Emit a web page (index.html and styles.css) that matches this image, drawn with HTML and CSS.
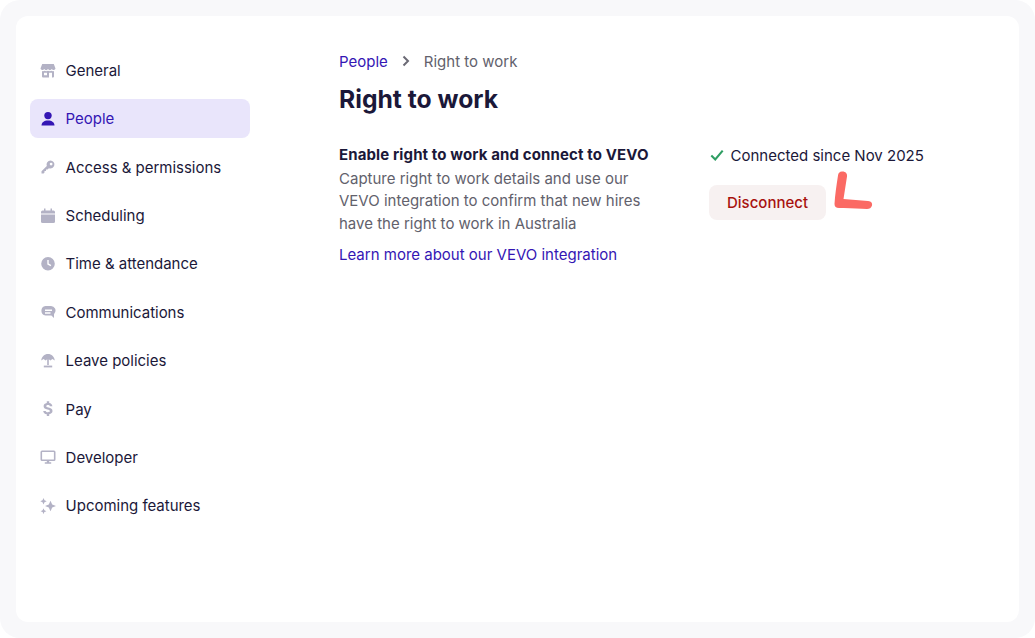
FILE: index.html
```html
<!DOCTYPE html>
<html lang="en">
<head>
<meta charset="utf-8">
<title>Right to work</title>
<link rel="stylesheet" href="styles.css">
</head>
<body>
<div class="frame">
  <div class="card">
    <nav class="nav">
      <a class="nav-item"><svg class="icon" viewBox="0 0 16 16"><path d="M2.200 1h11.600L15.500 5.500a2 2 0 0 1-3.700.6 2.200 2.200 0 0 1-3.800 0 2.200 2.200 0 0 1-3.800 0A2 2 0 0 1 .5 5.500z"/><path fill-rule="evenodd" d="M2 8c1 .3 1.900.2 2.600-.3 1 .6 2.100.6 3.400 0 1.200.6 2.400.6 3.400 0 .7.500 1.600.6 2.600.3v5.500a1 1 0 0 1-1 1H3a1 1 0 0 1-1-1zM4 9.800v2.400h3V9.800zm5 0v4.700h3V9.800z"/></svg><span>General</span></a>
      <a class="nav-item active"><svg class="icon" viewBox="0 0 16 16"><circle cx="8" cy="4.600" r="3.700"/><path d="M1.500 14.500c0-3 2.500-5 6.500-5s6.500 2 6.500 5z"/></svg><span>People</span></a>
      <a class="nav-item"><svg class="icon" viewBox="0 0 16 16"><path fill-rule="evenodd" d="M10.500 1.500a4 4 0 1 1-1.600 7.700L7.500 10.600H6v1.500H4.500v1.400l-.9.900H1.500v-2.200l5.300-5.300a4 4 0 0 1 3.700-5.400zm.6 2.200a1.400 1.400 0 1 0 0 2.800 1.400 1.400 0 0 0 0-2.800z"/></svg><span>Access &amp; permissions</span></a>
      <a class="nav-item"><svg class="icon" viewBox="0 0 16 16"><path d="M4 .5h1.500v2h5v-2H12v2h1.500A1.500 1.500 0 0 1 15 4v1.500H1V4a1.500 1.500 0 0 1 1.500-1.500H4z"/><path d="M1 6.500h14v7a1.500 1.500 0 0 1-1.500 1.500h-11A1.500 1.500 0 0 1 1 13.500z"/></svg><span>Scheduling</span></a>
      <a class="nav-item"><svg class="icon" viewBox="0 0 16 16"><path fill-rule="evenodd" d="M8 1a6.800 6.800 0 1 1 0 13.600A6.800 6.800 0 0 1 8 1zM7.300 4v4.400l3.300 1.900.7-1.200-2.600-1.500V4z"/></svg><span>Time &amp; attendance</span></a>
      <a class="nav-item"><svg class="icon" viewBox="0 0 16 16"><path fill-rule="evenodd" d="M5.500 2h5.500a4.500 4.500 0 0 1 3.500 7.300c-.3.500-.5.900-.5 1.300V14l-2.600-2.500H5.500a4.800 4.800 0 0 1 0-9.500zM5 5.500v1.500h7V5.500zm0 2.800v1.400h5.500V8.300z"/></svg><span>Communications</span></a>
      <a class="nav-item"><svg class="icon" viewBox="0 0 16 16"><path d="M8 1c3.600 0 6.200 2.500 6.800 6.500l-2.400-1.500-2 1.600-1.600-1.400v5.700H7.200V6.200L5.600 7.600l-2-1.600-2.400 1.500C1.800 3.500 4.400 1 8 1z"/><path d="M3.800 12.600h8.400v1.800H3.800z"/></svg><span>Leave policies</span></a>
      <a class="nav-item"><svg class="icon" viewBox="0 0 16 16"><path d="M6.800.2h2.400v1.900c1.800.3 3 1.400 3.200 3.200H9.900c-.2-.8-.8-1.200-1.900-1.200-1 0-1.700.4-1.700 1.100 0 .7.600 1 2.200 1.400 2.400.6 4 1.300 4 3.400 0 1.700-1.200 2.900-3.300 3.200v1.900H6.800v-1.900c-2.100-.3-3.400-1.500-3.600-3.300h2.500c.2.900.9 1.300 2.200 1.300 1.200 0 1.900-.4 1.900-1.200 0-.8-.7-1.100-2.400-1.500-2.200-.5-3.800-1.300-3.800-3.200 0-1.700 1.200-2.900 3.200-3.200z"/></svg><span>Pay</span></a>
      <a class="nav-item"><svg class="icon" viewBox="0 0 16 16"><path fill-rule="evenodd" d="M2 1.500h12A1.500 1.500 0 0 1 15.500 3v7.500A1.500 1.500 0 0 1 14 12H9.200v1.200h2v1.500H4.800v-1.500h2V12H2A1.500 1.500 0 0 1 .5 10.500V3A1.500 1.500 0 0 1 2 1.500zm.1 1.600V10.400h11.800V3.100z"/></svg><span>Developer</span></a>
      <a class="nav-item"><svg class="icon" viewBox="0 0 16 16"><path d="M10.500 2.800l1.700 3.600 3.800 1.600-3.800 1.600-1.700 3.600-1.700-3.600L5 8l3.800-1.600z"/><path d="M3.500 0l1 2.300 2.200 1-2.200 1-1 2.300-1-2.300-2.200-1 2.200-1z"/><path d="M3.500 10.300l.9 2 2 .9-2 .9-.9 2-.9-2-2-.9 2-.9z"/></svg><span>Upcoming features</span></a>
    </nav>
    <main class="main">
      <div class="crumbs">
        <a class="crumb-link">People</a>
        <svg class="chev" viewBox="0 0 10 12"><path d="M2.500 1.500 7 6l-4.500 4.500"/></svg>
        <span class="crumb-current">Right to work</span>
      </div>
      <h1 class="title">Right to work</h1>
      <section class="setting">
        <div class="setting-text">
          <h2 class="setting-title">Enable right to work and connect to VEVO</h2>
          <p class="setting-desc">Capture right to work details and use our VEVO integration to confirm that new hires have the right to work in Australia</p>
          <a class="learn">Learn more about our VEVO integration</a>
        </div>
        <div class="setting-side">
          <div class="status"><svg class="check" viewBox="0 0 16 16"><path d="M1.500 8.500 6 13l8.500-10"/></svg><span>Connected since Nov 2025</span></div>
          <div class="action">
            <button class="disconnect" type="button">Disconnect</button>
            <svg class="mark" viewBox="0 0 44 44"><path d="M12 3.500C15.500 3.300 17.500 5.500 17 8.500L13.500 31L38 33C41.500 33.300 42.500 35.500 42 37.500C41.300 40 39.500 41 37 41C29 40.800 19 39.500 9 40C6 40 4.500 38.500 4.500 36C5 27 6.500 17 8 7.500C8.300 5 9.500 3.700 12 3.500Z"/></svg>
          </div>
        </div>
      </section>
    </main>
  </div>
</div>
</body>
</html>
```
FILE: styles.css
```css
* { box-sizing: border-box; }
html, body { margin: 0; padding: 0; background: #fff; }
body { font-family: Inter, "Liberation Sans", sans-serif; color: #1b1839; }
.frame { width: 1035px; height: 638px; padding: 16px; background: #f8f8fa; border-radius: 20px; }
.card { display: flex; height: 606px; background: #fff; border-radius: 12px; }
.nav { width: 234px; padding: 35px 0 0 14px; display: flex; flex-direction: column; gap: 9.36px; flex: none; }
.nav-item { display: flex; align-items: center; gap: 9.600px; height: 39px; padding-left: 10px; border-radius: 8px; font-size: 15px; letter-spacing: -0.02px; color: #1b1839; }
.nav-item.active { background: #e9e5fb; color: #3416b4; }
.icon { width: 16px; height: 16px; fill: #b3b2c5; flex: none; }
.active .icon { fill: #3416b4; }
.main { margin-left: 89px; flex: 1; padding-top: 35px; }
.crumbs { display: flex; align-items: center; height: 20px; font-size: 15px; }
.crumb-link { color: #3416b4; }
.chev { width: 10px; height: 12px; margin: 0 13px; fill: none; stroke: #6b6a75; stroke-width: 2; }
.crumb-current { color: #62616c; }
.title { margin: 10px 0 0; font-size: 24.700px; line-height: 36px; font-weight: 700; color: #1b1839; }
.setting { display: flex; margin-top: 27px; }
.setting-text { width: 370px; flex: none; }
.setting-title { margin: 0; font-size: 15px; line-height: 22.500px; font-weight: 700; letter-spacing: 0.12px; }
.setting-desc { margin: 1px 0 0; width: 325px; font-size: 15px; line-height: 22.500px; color: #62616c; }
.learn { display: block; margin-top: 9px; font-size: 15px; line-height: 22.500px; color: #3416b4; }
.setting-side { display: flex; flex-direction: column; }
.status { display: flex; align-items: center; gap: 6.500px; height: 22.500px; padding-left: 1px; font-size: 15px; }
.check { width: 14px; height: 14px; fill: none; stroke: #2f9e63; stroke-width: 2.400; flex: none; }
.action { display: flex; align-items: flex-start; margin-top: 18.500px; }
.disconnect { height: 35px; width: 117px; border: 0; border-radius: 8px; background: #f7f1f1; color: #a8110f; font: 500 15px Inter, "Liberation Sans", sans-serif; }
.mark { width: 44px; height: 44px; margin: -17px 0 0 4px; fill: #fb6a64; flex: none; }
```
